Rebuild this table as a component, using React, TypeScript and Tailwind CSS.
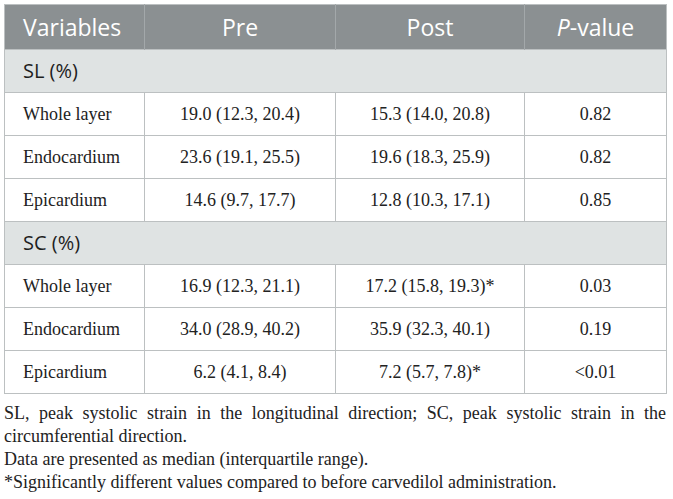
import React from 'react';

type Row = { label: string; pre: string; post: string; p: string };

const sections: { title: string; rows: Row[] }[] = [
  {
    title: 'SL (%)',
    rows: [
      { label: 'Whole layer', pre: '19.0 (12.3, 20.4)', post: '15.3 (14.0, 20.8)', p: '0.82' },
      { label: 'Endocardium', pre: '23.6 (19.1, 25.5)', post: '19.6 (18.3, 25.9)', p: '0.82' },
      { label: 'Epicardium', pre: '14.6 (9.7, 17.7)', post: '12.8 (10.3, 17.1)', p: '0.85' },
    ],
  },
  {
    title: 'SC (%)',
    rows: [
      { label: 'Whole layer', pre: '16.9 (12.3, 21.1)', post: '17.2 (15.8, 19.3)*', p: '0.03' },
      { label: 'Endocardium', pre: '34.0 (28.9, 40.2)', post: '35.9 (32.3, 40.1)', p: '0.19' },
      { label: 'Epicardium', pre: '6.2 (4.1, 8.4)', post: '7.2 (5.7, 7.8)*', p: '<0.01' },
    ],
  },
];

export default function App() {
  return (
    <div className="w-[673px] h-[499px] bg-white pl-[4px] pt-[4px] overflow-hidden font-['Liberation_Serif']">
      <table className="w-[662px] table-fixed border-collapse border border-[#bcc0c1] text-[#222]">
        <colgroup>
          <col className="w-[140px]" />
          <col className="w-[191px]" />
          <col className="w-[189px]" />
          <col className="w-[142px]" />
        </colgroup>
        <thead>
          <tr className="h-[45px] bg-[#8b9092] text-white text-[23px] font-['Open_Sans']">
            <th className="font-normal text-left pl-[18px] border-r border-[#a3a8aa]">Variables</th>
            <th className="font-normal text-center border-r border-[#a3a8aa]">Pre</th>
            <th className="font-normal text-center border-r border-[#a3a8aa]">Post</th>
            <th className="font-normal text-center">
              <i>P</i>-value
            </th>
          </tr>
        </thead>
        <tbody>
          {sections.map((s) => (
            <React.Fragment key={s.title}>
              <tr className="h-[43px] bg-[#dfe3e3] border-t border-[#bcc0c1]">
                <td colSpan={4} className="pl-[18px] text-[20px] font-['Open_Sans'] text-[#1e1e1e]">
                  {s.title}
                </td>
              </tr>
              {s.rows.map((r) => (
                <tr key={s.title + r.label} className="h-[43px] border-t border-[#bcc0c1] text-[18px]">
                  <td className="pl-[18px] border-r border-[#bcc0c1]">{r.label}</td>
                  <td className="text-center border-r border-[#bcc0c1]">{r.pre}</td>
                  <td className="text-center border-r border-[#bcc0c1]">{r.post}</td>
                  <td className="text-center">{r.p}</td>
                </tr>
              ))}
            </React.Fragment>
          ))}
        </tbody>
      </table>

      {/* footnotes */}
      <div className="w-[662px] mt-[8px] text-[18px] leading-[23px] text-[#222]">
        <p className="text-justify">
          SL, peak systolic strain in the longitudinal direction; SC, peak systolic strain in the circumferential direction.
        </p>
        <p>Data are presented as median (interquartile range).</p>
        <p>*Significantly different values compared to before carvedilol administration.</p>
      </div>
    </div>
  );
}
